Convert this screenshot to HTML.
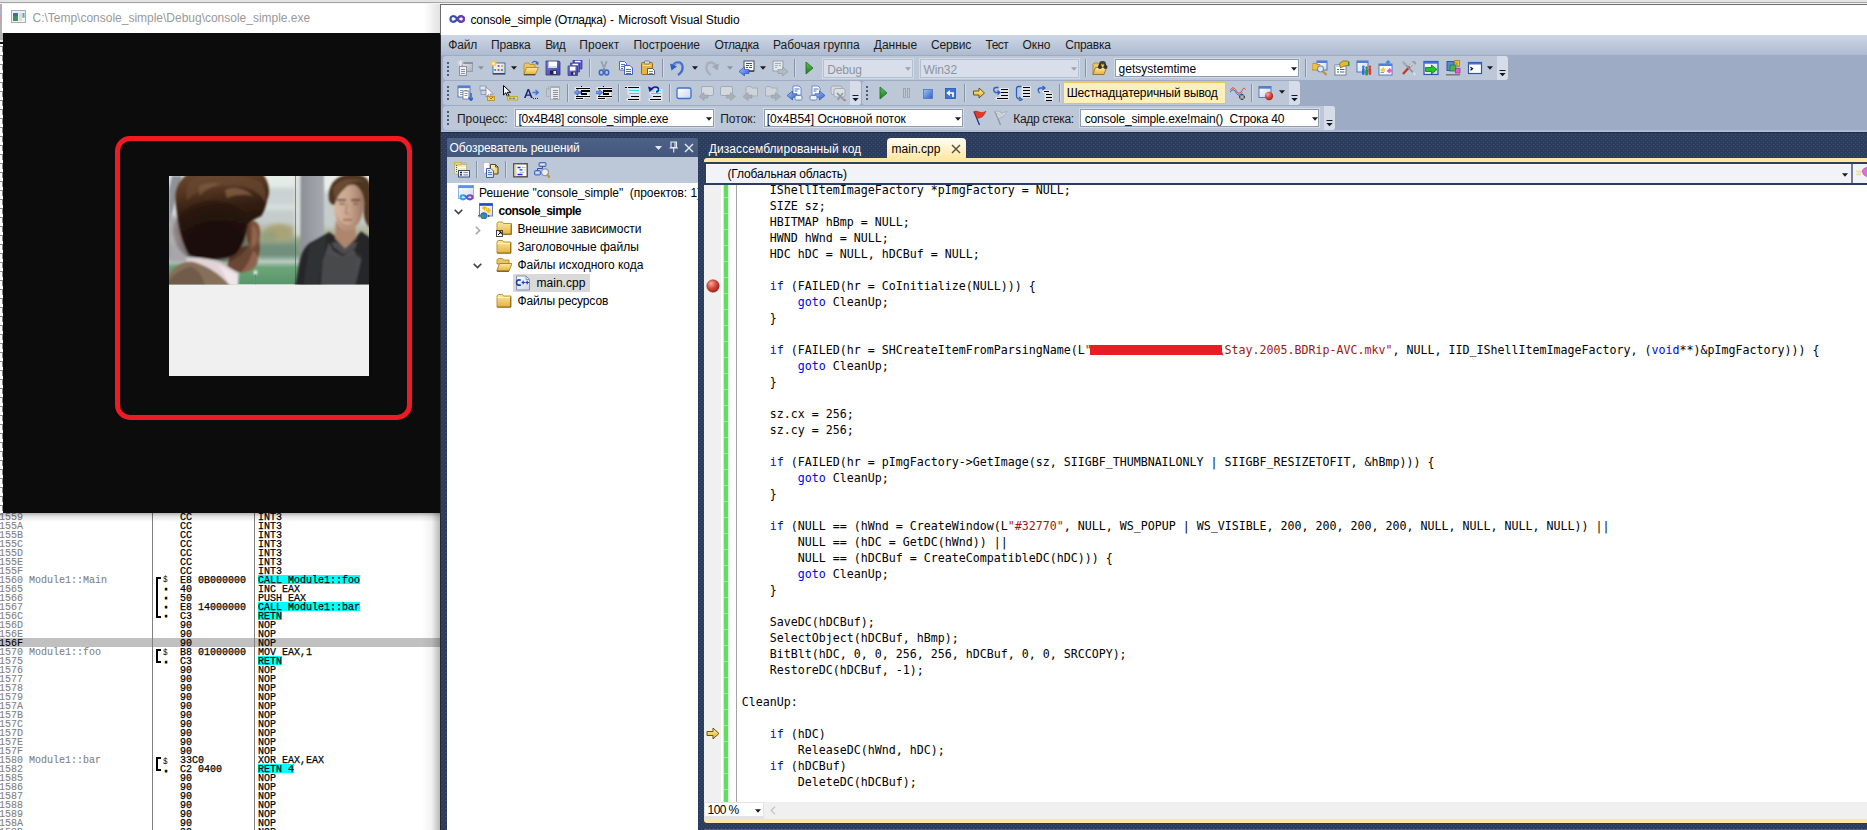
<!DOCTYPE html>
<html lang="ru"><head><meta charset="utf-8"><title>console_simple (Отладка) - Microsoft Visual Studio</title>
<style>
html,body{margin:0;padding:0;background:#fff;}
body{width:1867px;height:830px;overflow:hidden;font:12px 'Liberation Sans',sans-serif;color:#000;}
#root{position:relative;width:1867px;height:830px;overflow:hidden;}
#root div,#root span.t,#root svg{position:absolute;}
.t{white-space:pre;line-height:16px;}
.oc{font:11px/9px 'Liberation Mono',monospace;white-space:pre;transform-origin:0 0;transform:translateY(0.5px) scaleX(0.90909);-webkit-text-stroke:0.25px currentColor;}
.oc s{text-decoration:none;font-size:8.5px;position:relative;top:-1px;-webkit-text-stroke:0;}
.oc u{text-decoration:none;font-weight:700;-webkit-text-stroke:1px #000;position:relative;top:-1.5px;}
.code{font:11.643px/16px 'DejaVu Sans Mono','Liberation Mono',monospace;white-space:pre;color:#000;}
.code b{font-weight:400;color:#0000ff;}
.code i{font-style:normal;color:#a31515;}

</style></head><body>
<div id="root">
<div style="left:0px;top:513px;width:441px;height:317px;background:#fff;"></div>
<div style="left:0px;top:638px;width:441px;height:9px;background:#c0c0c0;"></div>
<div style="left:258px;top:575px;width:102px;height:9px;background:#00ffff;"></div>
<div style="left:258px;top:602px;width:102px;height:9px;background:#00ffff;"></div>
<div style="left:258px;top:611px;width:24px;height:9px;background:#00ffff;"></div>
<div style="left:258px;top:656px;width:24px;height:9px;background:#00ffff;"></div>
<div style="left:258px;top:764px;width:36px;height:9px;background:#00ffff;"></div>
<div class="oc" style="left:-1px;top:512px;color:#808080;-webkit-text-stroke:0.1px currentColor;">1559
155A
155B
155C
155D
155E
155F
1560 Module1::Main
1565
1566
1567
156C
156D
156E
<b style="color:#000;font-weight:400">156F</b>
1570 Module1::foo
1575
1576
1577
1578
1579
157A
157B
157C
157D
157E
157F
1580 Module1::bar
1582
1585
1586
1587
1588
1589
158A
158B</div>
<div class="oc" style="left:162.5px;top:512px;color:#000;">






<s>$</s>
<u>·</u>
<u>·</u>
<u>·</u>
<u>·</u>



<s>$</s>
<u>·</u>










<s>$</s>
<u>·</u>






</div>
<div class="oc" style="left:180px;top:512px;color:#000;">CC
CC
CC
CC
CC
CC
CC
E8 0B000000
40
50
E8 14000000
C3
90
90
90
B8 01000000
C3
90
90
90
90
90
90
90
90
90
90
33C0
C2 0400
90
90
90
90
90
90
90</div>
<div class="oc" style="left:258px;top:512px;color:#000;">INT3
INT3
INT3
INT3
INT3
INT3
INT3
CALL Module1::foo
INC EAX
PUSH EAX
CALL Module1::bar
RETN
NOP
NOP
NOP
MOV EAX,1
RETN
NOP
NOP
NOP
NOP
NOP
NOP
NOP
NOP
NOP
NOP
XOR EAX,EAX
RETN 4
NOP
NOP
NOP
NOP
NOP
NOP
NOP</div>
<div style="left:152px;top:513px;width:1px;height:317px;background:#808080;"></div>
<div style="left:254px;top:513px;width:1px;height:317px;background:#808080;"></div>
<div style="left:156px;top:577px;width:3px;height:37px;border:2px solid #000;border-right:none;"></div>
<div style="left:156px;top:649px;width:3px;height:10px;border:2px solid #000;border-right:none;"></div>
<div style="left:156px;top:757px;width:3px;height:10px;border:2px solid #000;border-right:none;"></div>
<div style="left:0px;top:513px;width:441px;height:9px;background:linear-gradient(rgba(0,0,0,.30),rgba(0,0,0,.10) 40%,rgba(0,0,0,0));"></div>
<div style="left:422px;top:513px;width:19px;height:317px;background:linear-gradient(90deg,rgba(0,0,0,0),rgba(0,0,0,.05) 50%,rgba(0,0,0,.30));"></div>
<div style="left:0px;top:0px;width:1867px;height:2px;background:#e3e3e3;"></div>
<div style="left:0px;top:2px;width:1867px;height:1px;background:#a5a5a5;"></div>
<div style="left:0px;top:3px;width:3px;height:510px;background:#d9d9d9;"></div>
<div style="left:0px;top:3px;width:3px;height:17px;background:#c4a6ae;"></div>
<div style="left:0px;top:10px;width:3px;height:4px;background:#9db7d8;"></div>
<div style="left:0px;top:20px;width:3px;height:20px;background:#b2b2b2;"></div>
<div style="left:0px;top:40px;width:3px;height:2px;background:#e4e4e4;"></div>
<div style="left:0px;top:42px;width:3px;height:2px;background:#101010;"></div>
<div style="left:0px;top:44px;width:3px;height:469px;background:repeating-linear-gradient(#fff 0,#fff 2px,#8c8c8c 2px,#8c8c8c 3px,#fff 3px,#fff 9px);"></div>
<div style="left:2px;top:44px;width:1px;height:469px;background:repeating-linear-gradient(#fff 0,#fff 2px,#8a8a8a 2px,#8a8a8a 8px,#fff 8px,#fff 9px);"></div>
<div style="left:2.3px;top:3px;width:438.7px;height:30px;background:#fff;"></div>
<div style="left:3px;top:33px;width:438px;height:480px;background:#0c0c0c;"></div>
<div style="left:424px;top:3px;width:17px;height:30px;background:linear-gradient(90deg,rgba(0,0,0,0),rgba(0,0,0,.12));"></div>
<svg style="left:11px;top:10px" width="15" height="13" viewBox="0 0 15 13"><rect x=".5" y=".5" width="14" height="12" fill="#f4f4f4" stroke="#a9aeb4"/><rect x="1.5" y="1.5" width="12" height="1" fill="#dfe6ee"/><rect x="2" y="3" width="5" height="8" fill="#3f8f66"/><rect x="2" y="3" width="5" height="3" fill="#3c6fa6"/><rect x="8" y="3" width="3" height="8" fill="#dcdcdc"/><rect x="11.5" y="3" width="2" height="4" fill="#5f9fd0"/><rect x="11.5" y="6" width="2" height="2" fill="#7fbf8f"/></svg>
<span class="t" style="left:32.5px;top:9.8px;color:#999;letter-spacing:-0.010px;">C:\Temp\console_simple\Debug\console_simple.exe</span>
<div style="left:115px;top:136px;width:287px;height:274px;border:5px solid #ed1c24;border-radius:15px;"></div>
<div style="left:169px;top:176px;width:200px;height:200px;background:#f0f0f0;"></div>
<svg style="left:169px;top:176px" width="200" height="108.6" viewBox="0 0 200 108" preserveAspectRatio="none">
<defs>
<filter id="b1" x="-20%" y="-20%" width="140%" height="140%"><feGaussianBlur stdDeviation="0.9"/></filter>
<filter id="b2" x="-20%" y="-20%" width="140%" height="140%"><feGaussianBlur stdDeviation="2.2"/></filter>
<filter id="b3" x="-30%" y="-30%" width="160%" height="160%"><feGaussianBlur stdDeviation="4"/></filter>
<linearGradient id="bg" x1="0" y1="0" x2="0" y2="1"><stop offset="0" stop-color="#e9eee9"/><stop offset=".12" stop-color="#e2e8e4"/><stop offset=".2" stop-color="#cdd5d4"/><stop offset=".42" stop-color="#c3cbca"/><stop offset=".5" stop-color="#b3b59a"/><stop offset=".6" stop-color="#94a388"/><stop offset=".72" stop-color="#7f9a86"/><stop offset=".79" stop-color="#b9cbc0"/><stop offset=".84" stop-color="#6ea57a"/><stop offset="1" stop-color="#57966a"/></linearGradient>
<linearGradient id="pil" x1="0" y1="0" x2="1" y2="0"><stop offset="0" stop-color="#8b8f95"/><stop offset=".5" stop-color="#9a9ea4"/><stop offset="1" stop-color="#a6aab0"/></linearGradient>
<linearGradient id="hair" x1="0.2" y1="0" x2="0.35" y2="1"><stop offset="0" stop-color="#69482f"/><stop offset=".22" stop-color="#543622"/><stop offset=".42" stop-color="#362013"/><stop offset=".62" stop-color="#25140c"/><stop offset="1" stop-color="#1e100a"/></linearGradient><radialGradient id="hair2" gradientUnits="userSpaceOnUse" cx="44" cy="56" r="46"><stop offset="0" stop-color="#1c0f09" stop-opacity=".85"/><stop offset=".6" stop-color="#1c0f09" stop-opacity=".45"/><stop offset="1" stop-color="#1c0f09" stop-opacity="0"/></radialGradient>
<linearGradient id="face" x1="0" y1="0" x2="1" y2="0"><stop offset="0" stop-color="#d9b9a2"/><stop offset=".55" stop-color="#c7a28b"/><stop offset="1" stop-color="#9a7560"/></linearGradient>
<clipPath id="pc"><rect width="200" height="108"/></clipPath>
</defs>
<g clip-path="url(#pc)">
<rect width="200" height="108" fill="url(#bg)"/>
<g filter="url(#b2)">
<rect x="96" y="12" width="32" height="10" fill="#c9d1d2"/>
<rect x="92" y="29" width="36" height="4" fill="#dde3e2"/>
<rect x="96" y="36" width="30" height="8" fill="#c5cccb"/>
<ellipse cx="110" cy="56" rx="14" ry="8" fill="#aaa374"/>
<ellipse cx="100" cy="60" rx="8" ry="6" fill="#93a07c"/>
<rect x="90" y="68" width="38" height="12" fill="#6f8f7b"/>
<rect x="0" y="0" width="12" height="40" fill="#d3dade"/>
<rect x="0" y="40" width="20" height="46" fill="#a9a5aa"/>
<rect x="0" y="58" width="18" height="10" fill="#b2aeb3"/>
<rect x="0" y="90" width="12" height="12" fill="#6a9a78"/>
<rect x="155" y="0" width="10" height="14" fill="#e9ede9"/>
<rect x="155" y="16" width="10" height="36" fill="#c4cccc"/>
<rect x="126" y="0" width="7" height="60" fill="#d9dfdd"/>
</g>
<path d="M3 0L13 0L0 48L0 14Z" fill="#8e9299" filter="url(#b1)"/>
<rect x="131.500" y="-2" width="23.500" height="112" fill="url(#pil)" filter="url(#b1)"/>
<rect x="126" y="0" width="1" height="108" fill="#46524f" opacity=".6"/>
<ellipse cx="86.500" cy="96" rx="2" ry="2.300" fill="#e4ece6" filter="url(#b1)"/>
<rect x="86" y="98" width="1" height="10" fill="#5f9170"/>
<!-- left man -->
<g filter="url(#b1)">
<path d="M62 70C70 72 84 70 90 62L91 72C90 84 84 92 72 96L58 92Z" fill="#6b4635"/>
<path d="M78 48C82 42 90 44 91 54C92 64 88 72 82 73C78 68 76 56 78 48Z" fill="#7d523c"/>
<path d="M82 50C86 48 88 54 88 60C88 66 86 70 83 70C82 64 81 56 82 50Z" fill="#93664d"/>
<path d="M84 74C88 76 90 82 88 88C84 94 78 96 72 96C78 90 82 82 84 74Z" fill="#8d6450"/>
<path d="M7 30C4 14 10 2 22 -4L92 -4C100 4 102 16 98 24C97 30 95 36 92 40C88 42 82 44 79 48C77 58 74 70 66 78C54 84 34 84 20 78C12 64 9 46 7 30Z" fill="url(#hair)"/>
<ellipse cx="44" cy="56" rx="40" ry="32" fill="url(#hair2)"/>
<path d="M22 4C40 -4 70 -4 92 6C96 12 98 18 96 26C90 14 76 8 60 10C44 10 30 12 18 24C16 16 18 8 22 4Z" fill="#6a4830" opacity=".7"/>
<path d="M56 14C64 10 76 12 84 20C78 18 66 18 58 22Z" fill="#94704f" opacity=".6"/>
<path d="M30 10C38 6 46 6 52 8C44 10 36 14 30 20Z" fill="#8a6648" opacity=".5"/>
<path d="M16 82C26 80 40 82 52 86L70 97L69 110L56 110C50 100 38 92 22 88Z" fill="#e1d3d7"/>
<path d="M48 88L68 98L69 110L60 110C58 102 54 94 48 88Z" fill="#efe6ea"/>
<path d="M-2 102C2 92 10 86 22 85C36 88 50 96 62 110L-2 110Z" fill="#86705a"/>
<path d="M-2 106C6 96 14 92 22 90C30 94 34 100 36 110L-2 110Z" fill="#6f5c48"/>
</g>
<!-- right man -->
<g filter="url(#b1)">
<path d="M126 110L130 88C132 76 136 68 146 64L160 56L170 62L186 62L192 55L202 62L202 110Z" fill="#25282a"/>
<path d="M140 70C146 66 152 62 158 60L150 110L134 110Z" fill="#2d3032"/>
<path d="M152 110L154 84L160 66L188 66L192 84L186 110Z" fill="#4d4e51"/>
<path d="M156 76C164 82 176 84 188 76L186 110L154 110Z" fill="#47484b"/>
<path d="M160 55L164 70L174 78L186 72L192 56L190 82L184 72L174 80L164 74L158 62Z" fill="#2b2622"/>
<path d="M167 44L186 46L187 62L176 72L166 62Z" fill="#ad866d"/>
<path d="M164 22C164 10 170 5 180 5C190 5 195 12 195 24C195 36 192 46 186 51C182 55 176 55 172 51C166 46 164 34 164 22Z" fill="url(#face)"/>
<path d="M166 34C168 46 172 52 179 54C186 52 190 46 193 36C190 44 186 48 179 49C172 48 168 42 166 34Z" fill="#b08a72" opacity=".8"/>
<path d="M160 24C158 8 168 -2 184 -2C196 -2 204 4 202 20L202 52C196 48 194 40 195 30C196 20 192 12 186 9C182 8 178 9 176 12C172 16 168 20 166 28C164 30 162 28 160 24Z" fill="#4e3422"/>
<path d="M164 12C170 2 184 0 198 6C190 4 180 6 174 12C170 16 168 20 166 24Z" fill="#725236" opacity=".8"/>
<path d="M168 24h9M182 24h9" stroke="#4a3326" stroke-width="1.600"/>
<path d="M170 27.500h6M184 27.500h5" stroke="#5e463a" stroke-width="1.400"/>
<path d="M178 28L176.500 37L180 38" fill="none" stroke="#a27d68" stroke-width="1.200"/>
<path d="M174 43.500h9" stroke="#8e5c4e" stroke-width="1.500"/>
</g>
</g></svg>
<div style="left:0px;top:3px;width:1867px;height:1px;background:#f4f4f4;"></div>
<div style="left:440px;top:4px;width:1427px;height:31px;background:#6b6b6b;"></div>
<div style="left:440px;top:35px;width:1427px;height:795px;background:#23272e;"></div>
<div style="left:441px;top:5px;width:1426px;height:30px;background:#fff;"></div>
<svg style="left:449px;top:11px" width="16" height="16" viewBox="0 0 16 16"><path d="M1.500 8c0-3 3.500-4 6-1l1.500 2c2.500 3 6 2 6-1s-3.500-4-6-1L7.500 9c-2.500 3-6 2-6-1z" fill="none" stroke="#3a4fa8" stroke-width="2.200"/><path d="M9 7c2.500-3 6-2 6 1s-3.500 4-6 1" fill="none" stroke="#6a3fb0" stroke-width="2.200"/></svg>
<span class="t" style="left:470.5px;top:12.3px;letter-spacing:-0.136px;">console_simple </span>
<span class="t" style="left:554.5px;top:12.3px;letter-spacing:-0.438px;">(Отладка)</span>
<span class="t" style="left:606.0px;top:12.3px;letter-spacing:0.543px;"> - </span>
<span class="t" style="left:618.3px;top:12.3px;letter-spacing:-0.024px;">Microsoft Visual Studio</span>
<div style="left:441px;top:35px;width:1426px;height:20px;background:linear-gradient(#ced7e6,#bcc7d9 55%,#aebbd0);"></div>
<span class="t" style="left:448.3px;top:36.8px;color:#1b1b1b;letter-spacing:-0.204px;">Файл</span>
<span class="t" style="left:491.1px;top:36.8px;color:#1b1b1b;letter-spacing:-0.174px;">Правка</span>
<span class="t" style="left:545.2px;top:36.8px;color:#1b1b1b;letter-spacing:-0.606px;">Вид</span>
<span class="t" style="left:579.2px;top:36.8px;color:#1b1b1b;letter-spacing:0.095px;">Проект</span>
<span class="t" style="left:633.4px;top:36.8px;color:#1b1b1b;letter-spacing:-0.023px;">Построение</span>
<span class="t" style="left:714.4px;top:36.8px;color:#1b1b1b;letter-spacing:-0.448px;">Отладка</span>
<span class="t" style="left:773.0px;top:36.8px;color:#1b1b1b;letter-spacing:-0.015px;">Рабочая группа</span>
<span class="t" style="left:873.8px;top:36.8px;color:#1b1b1b;letter-spacing:-0.010px;">Данные</span>
<span class="t" style="left:931.0px;top:36.8px;color:#1b1b1b;letter-spacing:-0.182px;">Сервис</span>
<span class="t" style="left:985.6px;top:36.8px;color:#1b1b1b;letter-spacing:-0.532px;">Тест</span>
<span class="t" style="left:1022.4px;top:36.8px;color:#1b1b1b;letter-spacing:0.077px;">Окно</span>
<span class="t" style="left:1065.2px;top:36.8px;color:#1b1b1b;letter-spacing:-0.225px;">Справка</span>
<div style="left:441px;top:55px;width:1426px;height:77px;background:#9dabc4;"></div>
<div style="left:441px;top:130px;width:1426px;height:2px;background:linear-gradient(#a7b4cc,#b6c2d9);"></div>
<div style="left:443px;top:56px;width:1065px;height:24px;background:#bcc7d8;border-radius:3px;"></div><div style="left:1497px;top:56px;width:11px;height:24px;background:#d6dce8;border-radius:0 3px 3px 0;"></div><svg style="left:1498.5px;top:69px" width="7" height="8" viewBox="0 0 7 8"><path d="M.5 1.500h6" stroke="#10182b" stroke-width="1"/><path d="M.3 4h6.400L3.500 7.300z" fill="#10182b"/></svg>
<div style="left:447px;top:62px;width:2px;height:14px;background:repeating-linear-gradient(#4a5a78 0,#4a5a78 2px,rgba(0,0,0,0) 2px,rgba(0,0,0,0) 4px);"></div>
<svg style="left:457px;top:60px" width="16" height="16" viewBox="0 0 16 16"><rect x="5.500" y="2.500" width="10" height="9" fill="url(#gGray)" stroke="#9aa0a8"/><rect x="5" y="2" width="11" height="2" fill="#8d939b"/><rect x="2.500" y="6.500" width="7" height="9" fill="#eceef0" stroke="#8d939b"/><path d="M4 9.500h4M4 11.500h4M4 13.500h4" stroke="#8d939b"/><path d="M3.500 0v6M.5 3h6M1.300.8l4.400 4.400M5.700.8L1.300 5.200" stroke="#e4e8ee" stroke-width="1"/></svg>
<svg style="left:478px;top:66px" width="6" height="4" viewBox="0 0 7 4"><path d="M0 0h7L3.500 4z" fill="#8d939b"/></svg>
<svg style="left:490px;top:60px" width="16" height="16" viewBox="0 0 16 16"><rect x="3" y="3" width="12" height="11" fill="url(#gWin)" stroke="#4b5f86" stroke-width=".9"/><rect x="3" y="13" width="12" height="1.4" fill="#36456a"/><circle cx="8.5" cy="6" r="1.1" fill="#6a5acd"/><circle cx="12" cy="6" r="1.1" fill="#f59a23"/><circle cx="5.2" cy="10" r="1.1" fill="#2a7fe0"/><circle cx="8.5" cy="10" r="1.1" fill="#e8382a"/><circle cx="12" cy="10" r="1.1" fill="#2a9a2a"/><path d="M3.5 0v7M0 3.5h7M1 1l5 5M6 1L1 6" stroke="#f5c93c" stroke-width="1.3"/><circle cx="3.5" cy="3.5" r="1.3" fill="#fff6c8"/></svg>
<svg style="left:510.5px;top:66px" width="6" height="4" viewBox="0 0 7 4"><path d="M0 0h7L3.500 4z" fill="#1b1b1b"/></svg>
<svg style="left:523px;top:60px" width="16" height="16" viewBox="0 0 16 16"><path d="M1 4.5l1-1.5h4l1 1.5h5V14H1z" fill="#e9c566" stroke="#b58a2a" stroke-width=".8"/><path d="M3.5 7.5H15.5L12.3 14.5H.8z" fill="url(#gFold)" stroke="#a87d22" stroke-width=".8"/><path d="M1 14.8h11.3" stroke="#333" stroke-width="1"/><path d="M9 3.2C10.5.8 13.5.8 14.6 3.4" fill="none" stroke="#3b66b5" stroke-width="1.2"/><path d="M15.6 1.6l-.4 3.4-3-1.2z" fill="#3b66b5"/></svg>
<svg style="left:545px;top:60px" width="16" height="16" viewBox="0 0 16 16"><path d="M1 1h13l1 1v13H1z" fill="url(#gDisk)" stroke="#34358a" stroke-width=".8"/><rect x="3.5" y="1.5" width="8.5" height="6.5" fill="#fff"/><rect x="3.5" y="6" width="8.5" height="2" fill="#d5dcf0"/><rect x="5" y="10.5" width="6.5" height="4" fill="#23233a"/><rect x="8.5" y="11" width="2.5" height="3" fill="#e8e8f4"/></svg>
<svg style="left:567px;top:60px" width="16" height="16" viewBox="0 0 16 16"><path d="M6 0h9v9H6z" fill="#5a5cc0" stroke="#34358a" stroke-width=".7"/><rect x="8" y=".8" width="5.5" height="1.6" fill="#fff"/><path d="M3.500 3h9v9H3.500z" fill="#6264c8" stroke="#34358a" stroke-width=".7"/><rect x="5.500" y="3.800" width="5.500" height="1.600" fill="#fff"/><path d="M1 6h9.500v9.500H1z" fill="url(#gDisk)" stroke="#34358a" stroke-width=".7"/><rect x="3" y="6.600" width="5.500" height="4" fill="#fff"/><rect x="4" y="12" width="4.500" height="3" fill="#2b2b44"/><rect x="6.300" y="12.400" width="1.800" height="2.300" fill="#e0e0ee"/></svg>
<div style="left:589px;top:59px;width:1px;height:18px;background:#8591a5;"></div><div style="left:590px;top:59px;width:1px;height:18px;background:#d3dae6;"></div>
<svg style="left:596px;top:60px" width="16" height="16" viewBox="0 0 16 16"><path d="M5.300 1L8.600 10M10.700 1L7.400 10" stroke="#767c86" stroke-width="1.500"/><path d="M5.300 1L8.100 8.500M10.700 1L7.900 8.500" stroke="#c9ced6" stroke-width=".6"/><ellipse cx="5.300" cy="12.500" rx="2" ry="2.500" fill="none" stroke="#3a68c8" stroke-width="1.500"/><ellipse cx="10.700" cy="12.500" rx="2" ry="2.500" fill="none" stroke="#3a68c8" stroke-width="1.500"/></svg>
<svg style="left:618px;top:60px" width="16" height="16" viewBox="0 0 16 16"><path d="M1.500 1.500h5l2 2v6.500h-7z" fill="#fff" stroke="#4f73c0"/><path d="M3 4.500h4M3 6.500h4M3 8.500h2" stroke="#4f73c0"/><path d="M6.500 5.500h5.500l2.500 2.500v6.500h-8z" fill="#fff" stroke="#3f63b5"/><path d="M8 9.500h5M8 11.500h5M8 13.500h5" stroke="#3f73d5" shape-rendering="crispEdges"/></svg>
<svg style="left:640px;top:60px" width="16" height="16" viewBox="0 0 16 16"><rect x="1.500" y="2.500" width="11" height="12" rx="1" fill="#e6b645" stroke="#9a6c14"/><rect x="4.500" y="1" width="5" height="3" rx=".8" fill="#d9dce2" stroke="#6b6f78" stroke-width=".8"/><rect x="3" y="5" width="8" height="1" fill="#f6dd95"/><path d="M7.500 8.500h5l2 2v4h-7z" fill="#fff" stroke="#5a5f6b"/><path d="M9 11.500h4M9 13.500h4" stroke="#7b8498" shape-rendering="crispEdges"/></svg>
<div style="left:662px;top:59px;width:1px;height:18px;background:#8591a5;"></div><div style="left:663px;top:59px;width:1px;height:18px;background:#d3dae6;"></div>
<svg style="left:669px;top:60px" width="16" height="16" viewBox="0 0 16 16"><path d="M4 6C6 1.500 12.500 1 13.500 6.500C14 10 12 13 9 15" fill="none" stroke="#3f6fd0" stroke-width="2.400"/><path d="M4 6C6 2.500 11.500 2 12.500 6.500" fill="none" stroke="#8ab0ee" stroke-width=".8"/><path d="M1 3.500L8 6.500L2.500 10.500z" fill="#2f5fc4"/></svg>
<svg style="left:692px;top:66px" width="6" height="4" viewBox="0 0 7 4"><path d="M0 0h7L3.500 4z" fill="#1b1b1b"/></svg>
<svg style="left:704px;top:60px" width="16" height="16" viewBox="0 0 16 16"><path d="M12 6C10 1.500 3.500 1 2.500 6.500C2 10 4 13 7 15" fill="none" stroke="#aab0ba" stroke-width="2.400"/><path d="M15 3.500L8 6.500L13.500 10.500z" fill="#a2a8b2"/></svg>
<svg style="left:727px;top:66px" width="6" height="4" viewBox="0 0 7 4"><path d="M0 0h7L3.500 4z" fill="#8d939b"/></svg>
<svg style="left:739px;top:60px" width="16" height="16" viewBox="0 0 16 16"><rect x="5" y="1" width="10" height="10" fill="#fff" stroke="#4b4f66" stroke-width="1"/><rect x="5" y="10.500" width="10" height="1.200" fill="#2b2f44"/><path d="M7 3.500h6M7 5.500h3M11 5.500h2M7 7.500h2M10 7.500h3" stroke="#2a4fd0" stroke-width="1.100"/><path d="M0 11.500L5.500 7v2.500h4.500v4H5.500V16z" fill="url(#gBlue)" stroke="#2c55b8" stroke-width=".7"/></svg>
<svg style="left:760px;top:66px" width="6" height="4" viewBox="0 0 7 4"><path d="M0 0h7L3.500 4z" fill="#1b1b1b"/></svg>
<svg style="left:772px;top:60px" width="16" height="16" viewBox="0 0 16 16"><rect x="1" y="1" width="10" height="10" fill="#e4e7eb" stroke="#9aa0a8" stroke-width="1"/><path d="M3 3.500h6M3 5.500h3M7 5.500h2M3 7.500h2" stroke="#a7adb6" stroke-width="1.100"/><path d="M16 11.500L10.500 7v2.500H6v4h4.500V16z" fill="#b4bac3" stroke="#9399a2" stroke-width=".7"/></svg>
<div style="left:794px;top:59px;width:1px;height:18px;background:#8591a5;"></div><div style="left:795px;top:59px;width:1px;height:18px;background:#d3dae6;"></div>
<svg style="left:801px;top:60px" width="16" height="16" viewBox="0 0 16 16"><path d="M5 2L12 8L5 14z" fill="url(#gGreen)" stroke="#1c6a1c" stroke-width=".8"/></svg>
<div style="left:823.3px;top:58.6px;width:87.3px;height:17px;background:#d8dfea;border:1px solid #b4bfd0;box-shadow:0 0 0 1px rgba(255,255,255,.35);"></div><span class="t" style="left:827.3px;top:61.7px;color:#8c94a3;letter-spacing:-0.175px;">Debug</span><svg style="left:904.5999999999999px;top:66.89999999999999px" width="6" height="4" viewBox="0 0 7 4"><path d="M0 0h7L3.500 4z" fill="#9aa2b0"/></svg>
<div style="left:919.5px;top:58.6px;width:157px;height:17px;background:#d8dfea;border:1px solid #b4bfd0;box-shadow:0 0 0 1px rgba(255,255,255,.35);"></div><span class="t" style="left:923.5px;top:61.7px;color:#8c94a3;letter-spacing:-0.103px;">Win32</span><svg style="left:1070.5px;top:66.89999999999999px" width="6" height="4" viewBox="0 0 7 4"><path d="M0 0h7L3.500 4z" fill="#9aa2b0"/></svg>
<div style="left:1085px;top:59px;width:1px;height:18px;background:#8591a5;"></div><div style="left:1086px;top:59px;width:1px;height:18px;background:#d3dae6;"></div>
<svg style="left:1092px;top:60px" width="16" height="16" viewBox="0 0 16 16"><path d="M1 4.500l1-1.500h4l1 1.500h5V14H1z" fill="#e9c566" stroke="#a8801f" stroke-width=".8"/><path d="M3.500 7.500H14.500L12 14.500H.8z" fill="url(#gFold)" stroke="#8a6a18" stroke-width=".8"/><path d="M8.500 2l-1.500 6M12.500 2l1.500 6" stroke="#222" stroke-width="1.600"/><circle cx="8" cy="7" r="2" fill="#333"/><circle cx="13.500" cy="7" r="2" fill="#333"/><rect x="8.500" y="1" width="4" height="3" fill="#444"/></svg>
<div style="left:1114.5px;top:58.6px;width:182px;height:16.5px;background:#fff;border:1px solid #8d9bb3;box-shadow:0 0 0 1px rgba(255,255,255,.35);"></div><span class="t" style="left:1118.5px;top:60.7px;letter-spacing:0.026px;">getsystemtime</span><svg style="left:1290.5px;top:67.05px" width="6" height="4" viewBox="0 0 7 4"><path d="M0 0h7L3.500 4z" fill="#1b1b1b"/></svg>
<div style="left:1305px;top:59px;width:1px;height:18px;background:#8591a5;"></div><div style="left:1306px;top:59px;width:1px;height:18px;background:#d3dae6;"></div>
<svg style="left:1312px;top:60px" width="16" height="16" viewBox="0 0 16 16"><rect x="5" y="1" width="10" height="9" fill="url(#gWin)" stroke="#4b6fb8" stroke-width=".9"/><rect x="5" y="1" width="10" height="2" fill="#4f7fd8"/><path d="M0 4.500l1-1.200h3l1 1.200h3V10H0z" fill="#ecc04a" stroke="#a8801f" stroke-width=".7"/><circle cx="8.500" cy="9" r="3" fill="#d6ecf8" stroke="#7b8ca8" stroke-width="1.100"/><path d="M10.800 11.300L14.500 15" stroke="#c98a2b" stroke-width="2"/></svg>
<svg style="left:1334px;top:60px" width="16" height="16" viewBox="0 0 16 16"><rect x="1" y="5" width="11" height="10" fill="#fff" stroke="#6b7488" stroke-width=".9"/><rect x="1" y="5" width="11" height="2" fill="#c9d2e4"/><path d="M3 9.500h2M6 9.500h4.500M3 12h2M6 12h4.500" stroke="#3f63b5" stroke-width="1.100"/><path d="M5.500 3.500L9 1h4.500l1 1.500v3l-5 .8L6.500 8z" fill="#e8b838" stroke="#8a6a18" stroke-width=".8"/><rect x="14" y="1.500" width="1.500" height="4.500" fill="#2a9a2a"/></svg>
<svg style="left:1356px;top:60px" width="16" height="16" viewBox="0 0 16 16"><rect x="1" y="1" width="11" height="11" fill="url(#gWin)" stroke="#4b6fb8" stroke-width=".9"/><rect x="1" y="1" width="11" height="2" fill="#4f7fd8"/><rect x="6" y="8" width="2.600" height="7" rx="1.200" fill="#2f6fe0"/><circle cx="7.300" cy="6.800" r="1.300" fill="#2f6fe0"/><rect x="9.300" y="9" width="2.600" height="6.500" rx="1.200" fill="#2a9a2a"/><circle cx="10.600" cy="7.800" r="1.300" fill="#2a9a2a"/><rect x="12.600" y="8" width="2.600" height="7" rx="1.200" fill="#e23a2a"/><circle cx="13.900" cy="6.800" r="1.300" fill="#e23a2a"/></svg>
<svg style="left:1378px;top:60px" width="16" height="16" viewBox="0 0 16 16"><rect x="1" y="4" width="13" height="11" fill="#fff" stroke="#4b6fb8" stroke-width=".9"/><rect x="1" y="4" width="13" height="2" fill="#4f7fd8"/><path d="M2.500 10h3.500M2.500 12.500h3.500" stroke="#8a94a8"/><path d="M5 6.500l1.200 2 2 .300-1.500 1.500.4 2-1.900-1-1.900 1 .4-2L2.200 8.800l2-.300z" fill="#f5c93c"/><path d="M11.500 8l3 2.500-3 3-3-2.500z" fill="#e85ad0"/><path d="M10 0l2.500 2L10 4.500 7.500 2.500z" fill="#3f8fd8"/></svg>
<svg style="left:1401px;top:60px" width="16" height="16" viewBox="0 0 16 16"><path d="M2 14L11 4" stroke="#c03a2a" stroke-width="2.400"/><path d="M8.500 6.500L13 2" stroke="#c9ced6" stroke-width="2"/><path d="M10.500 1l3.500 0 1.500 3-2 .5z" fill="#9aa0a8"/><path d="M3 3L13.500 14" stroke="#8d939b" stroke-width="1.800"/><path d="M1 2.500C1 1 3 .5 4 1.500L3 3l1 1 1.500-1C6 5 4.500 6 3 5.500z" fill="#aab0ba"/><path d="M12 12.500l2.500 2.500" stroke="#d9dce2" stroke-width="2.200"/></svg>
<svg style="left:1423px;top:60px" width="16" height="16" viewBox="0 0 16 16"><rect x="1" y="1.500" width="14" height="13" fill="url(#gWin)" stroke="#2f55b0" stroke-width="1.200"/><rect x="1" y="1.500" width="14" height="2.200" fill="#3f6fd8"/><path d="M2.500 7.500h6V5l5.500 4.500L8.500 14v-2.500h-6z" fill="#1ec81e" stroke="#0c7a0c" stroke-width=".8"/></svg>
<svg style="left:1445px;top:60px" width="16" height="16" viewBox="0 0 16 16"><rect x="2" y="1.500" width="7" height="9" fill="#4f8fd8" stroke="#2f55b0" stroke-width="1"/><rect x="5" y="5" width="6" height="6" fill="#4fae5a" stroke="#2a7a34" stroke-width=".8"/><path d="M9.500.5h5v6h-2.500v-3.500h-2.500z" fill="#f0c030" stroke="#9a7410" stroke-width=".7"/><rect x="10.500" y="8.500" width="4.500" height="4.500" fill="#e85ad0" stroke="#a02a90" stroke-width=".7"/><rect x="1" y="14" width="14" height="1.500" fill="#7a7a7a"/></svg>
<svg style="left:1467px;top:60px" width="16" height="16" viewBox="0 0 16 16"><rect x="1.500" y="2.500" width="13" height="11" fill="#fff" stroke="#2f55b0" stroke-width="1.200"/><rect x="1.500" y="2.500" width="13" height="2" fill="#3f6fd8"/><path d="M3.500 7.200l2 1.500-2 1.500" fill="none" stroke="#000" stroke-width="1.200"/></svg>
<svg style="left:1487px;top:66px" width="6" height="4" viewBox="0 0 7 4"><path d="M0 0h7L3.500 4z" fill="#1b1b1b"/></svg>
<div style="left:443px;top:81px;width:418px;height:24px;background:#bcc7d8;border-radius:3px;"></div><div style="left:850px;top:81px;width:11px;height:24px;background:#d6dce8;border-radius:0 3px 3px 0;"></div><svg style="left:851.5px;top:94px" width="7" height="8" viewBox="0 0 7 8"><path d="M.5 1.500h6" stroke="#10182b" stroke-width="1"/><path d="M.3 4h6.400L3.500 7.300z" fill="#10182b"/></svg>
<div style="left:447px;top:86px;width:2px;height:14px;background:repeating-linear-gradient(#4a5a78 0,#4a5a78 2px,rgba(0,0,0,0) 2px,rgba(0,0,0,0) 4px);"></div>
<svg style="left:457px;top:85px" width="16" height="16" viewBox="0 0 16 16"><rect x="1" y="1" width="12" height="11" fill="#fff" stroke="#4b6fb8" stroke-width=".9"/><rect x="1" y="1" width="12" height="2.200" fill="#4f7fd8"/><path d="M3 5.500h3M3 7.500h3M3 9.500h3M7.500 5.500h3M7.500 7.500h3" stroke="#7b8ca8" stroke-width=".9"/><rect x="6" y="6" width="6" height="8" fill="#fff" stroke="#6b7488" stroke-width=".8"/><path d="M7.500 8.500h3M7.500 10.500h3" stroke="#7b8ca8" stroke-width=".9"/><path d="M14 8v7M11.500 12.500L14 15.500L16.500 12.500" fill="none" stroke="#2f5fc4" stroke-width="1.400"/></svg>
<svg style="left:479px;top:85px" width="16" height="16" viewBox="0 0 16 16"><rect x="1" y="1" width="6" height="4" fill="#dfe5ef" stroke="#7b8ca8" stroke-width=".7"/><rect x="2" y="5.500" width="6" height="4" fill="#c9d2e0" stroke="#7b8ca8" stroke-width=".7"/><path d="M7 2v10l2.500-2.500 2 4.500 1.500-.7-2-4.300h3.500z" fill="#f4f6f9" stroke="#8a919c" stroke-width=".8"/><rect x="8.500" y="11.500" width="7" height="4" fill="#f5d24a" stroke="#b58a1a" stroke-width=".8"/><path d="M10.500 12.500l1.500 1.500 2-2" fill="none" stroke="#7a5a10" stroke-width=".8"/></svg>
<svg style="left:502px;top:85px" width="16" height="16" viewBox="0 0 16 16"><path d="M1.500 .5v9.500l2.300-2.200 1.800 4.100 1.500-.7-1.800-3.900H8.700z" fill="#fff" stroke="#000" stroke-width="1"/><rect x="5.500" y="11.500" width="10" height="3.500" fill="#f2ea1a" stroke="#b0a810" stroke-width=".8"/><path d="M7 13.300h7" stroke="#2f5fc4" stroke-width="1.100" stroke-dasharray="2.500 1"/></svg>
<svg style="left:523px;top:85px" width="16" height="16" viewBox="0 0 16 16"><path d="M1 13L4.600 4h1.500L9.700 13H7.900l-.8-2.200H3.500L2.700 13zM4 9.500h2.600L5.300 6z" fill="#1a237e"/><path d="M9.500 7.500h5M12.500 5l2.800 2.500-2.800 2.500" fill="none" stroke="#3f73d5" stroke-width="1.300"/><path d="M10 13.500h5.500" stroke="#1a237e" stroke-width="1" stroke-dasharray="1 1"/></svg>
<svg style="left:545px;top:85px" width="16" height="16" viewBox="0 0 16 16"><rect x="5.500" y="1.500" width="9" height="13" fill="#e9ebee" stroke="#a9afb8"/><rect x="5" y="1" width="10" height="2" fill="#a9afb8"/><path d="M8 5.500h5M8 7.500h5M8 9.500h5M8 11.500h5M8 13.500h5" stroke="#8d939b" shape-rendering="crispEdges"/><path d="M4.500 3.500h-3v8h3M3.500 1v4" fill="none" stroke="#a9afb8"/></svg>
<div style="left:567px;top:84px;width:1px;height:18px;background:#8591a5;"></div><div style="left:568px;top:84px;width:1px;height:18px;background:#d3dae6;"></div>
<svg style="left:574px;top:85px" width="16" height="16" viewBox="0 0 16 16"><path d="M2 3.500h14M2 11.500h14M2 13.500h7" stroke="#fff" stroke-opacity=".55" stroke-width="3" stroke-linecap="square" fill="none"/><path d="M7 6h9M7 9h6" stroke="#fff" stroke-opacity=".55" stroke-width="4" stroke-linecap="square" fill="none"/><path d="M2 3.500h14M2 11.500h14M2 13.500h7" stroke="#000" stroke-width="1" shape-rendering="crispEdges" fill="none"/><path d="M7 6h9M7 9h6" stroke="#000" stroke-width="2" shape-rendering="crispEdges" fill="none"/><path d="M7.500 1v14" stroke="#000" stroke-width="1" stroke-dasharray="1 1" shape-rendering="crispEdges"/><path d="M0 7.500L4 4.300v2.200h3v2H4v2.200z" fill="url(#gBlue)" stroke="#2c55b8" stroke-width=".5"/></svg>
<svg style="left:596px;top:85px" width="16" height="16" viewBox="0 0 16 16"><path d="M2 3.500h14M2 11.500h14M2 13.500h7" stroke="#fff" stroke-opacity=".55" stroke-width="3" stroke-linecap="square" fill="none"/><path d="M7 6h9M7 9h6" stroke="#fff" stroke-opacity=".55" stroke-width="4" stroke-linecap="square" fill="none"/><path d="M2 3.500h14M2 11.500h14M2 13.500h7" stroke="#000" stroke-width="1" shape-rendering="crispEdges" fill="none"/><path d="M7 6h9M7 9h6" stroke="#000" stroke-width="2" shape-rendering="crispEdges" fill="none"/><path d="M7.500 1v14" stroke="#000" stroke-width="1" stroke-dasharray="1 1" shape-rendering="crispEdges"/><path d="M7 7.500L3 4.300v2.200H0v2h3v2.200z" fill="url(#gBlue)" stroke="#2c55b8" stroke-width=".5"/></svg>
<div style="left:618px;top:84px;width:1px;height:18px;background:#8591a5;"></div><div style="left:619px;top:84px;width:1px;height:18px;background:#d3dae6;"></div>
<svg style="left:625px;top:85px" width="16" height="16" viewBox="0 0 16 16"><path d="M0 2.500h2M3 2.500h11M6 11.500h8M3 14.500h11" stroke="#fff" stroke-opacity=".55" stroke-width="3" stroke-linecap="square" fill="none"/><path d="M4 5.500h10M4 8.500h10" stroke="#fff" stroke-opacity=".55" stroke-width="3" stroke-linecap="square" fill="none"/><path d="M0 2.500h2M3 2.500h11M6 11.500h8M3 14.500h11" stroke="#000" stroke-width="1" shape-rendering="crispEdges" fill="none"/><path d="M4 5.500h10M4 8.500h10" stroke="#19e8e8" stroke-width="1" shape-rendering="crispEdges" fill="none"/></svg>
<svg style="left:647px;top:85px" width="16" height="16" viewBox="0 0 16 16"><path d="M6 11.500h8M3 14.500h11" stroke="#fff" stroke-opacity=".55" stroke-width="3" stroke-linecap="square" fill="none"/><path d="M4 8.500h10M9 5.500h5" stroke="#fff" stroke-opacity=".55" stroke-width="3" stroke-linecap="square" fill="none"/><path d="M6 11.500h8M3 14.500h11" stroke="#000" stroke-width="1" shape-rendering="crispEdges" fill="none"/><path d="M4 8.500h10M9 5.500h5" stroke="#19e8e8" stroke-width="1" shape-rendering="crispEdges" fill="none"/><path d="M4.500 4.500C6 1 11.500 1.300 11.500 4.500C11.500 6 10.500 7 9 7" fill="none" stroke="#1a1a9a" stroke-width="1.400"/><path d="M1 1.500L6.500 3.500 2.500 7z" fill="#1a1a9a"/></svg>
<div style="left:669px;top:84px;width:1px;height:18px;background:#8591a5;"></div><div style="left:670px;top:84px;width:1px;height:18px;background:#d3dae6;"></div>
<svg style="left:676px;top:85px" width="16" height="16" viewBox="0 0 16 16"><rect x="1" y="3" width="14" height="10.500" rx="1.800" fill="url(#gWin)" stroke="#3f6fd0" stroke-width="1.300"/></svg>
<svg style="left:698px;top:85px" width="16" height="16" viewBox="0 0 16 16"><rect x="3.500" y="1.500" width="12" height="9" rx="1.500" fill="#d5d9df" stroke="#a4aab3" stroke-width="1"/><path d="M1 11.500L6 7.500v2.500h4v3H6v2.500z" fill="#aab0ba" stroke="#969ca6" stroke-width=".6"/></svg>
<svg style="left:720px;top:85px" width="16" height="16" viewBox="0 0 16 16"><rect x=".5" y="1.500" width="12" height="9" rx="1.500" fill="#d5d9df" stroke="#a4aab3" stroke-width="1"/><path d="M15.500 11.500L10.500 7.500v2.500h-4v3h4v2.500z" fill="#aab0ba" stroke="#969ca6" stroke-width=".6"/></svg>
<svg style="left:742px;top:85px" width="16" height="16" viewBox="0 0 16 16"><path d="M4 3l1-1.500h4l1 1.500h5.500v8H4z" fill="#d0d4da" stroke="#a4aab3" stroke-width=".9"/><path d="M1 11.500L6 7.500v2.500h4v3H6v2.500z" fill="#aab0ba" stroke="#969ca6" stroke-width=".6"/></svg>
<svg style="left:765px;top:85px" width="16" height="16" viewBox="0 0 16 16"><path d="M.5 3l1-1.500h4l1 1.500H12v8H.5z" fill="#d0d4da" stroke="#a4aab3" stroke-width=".9"/><path d="M15.500 11.500L10.500 7.500v2.500h-4v3h4v2.500z" fill="#aab0ba" stroke="#969ca6" stroke-width=".6"/></svg>
<svg style="left:787px;top:85px" width="16" height="16" viewBox="0 0 16 16"><path d="M6 1h6l2 2v7H6z" fill="#fff" stroke="#4f73c0" stroke-width=".8"/><path d="M7.500 4h5M7.500 6h3" stroke="#3f73d5" stroke-width="1.100"/><path d="M0 10.500L5.500 6v2.700h4.500v3.600H5.500V15z" fill="url(#gBlue)" stroke="#2c55b8" stroke-width=".7"/><rect x="8" y="10.500" width="7" height="4.500" rx="1.500" fill="#eef3fb" stroke="#4f73c0" stroke-width=".8"/></svg>
<svg style="left:809px;top:85px" width="16" height="16" viewBox="0 0 16 16"><path d="M3 1h6l2 2v7H3z" fill="#fff" stroke="#4f73c0" stroke-width=".8"/><path d="M4.500 4h5M4.500 6h3" stroke="#3f73d5" stroke-width="1.100"/><path d="M16 10.500L10.500 6v2.700H6v3.600h4.500V15z" fill="url(#gBlue)" stroke="#2c55b8" stroke-width=".7"/><rect x="1" y="10.500" width="7" height="4.500" rx="1.500" fill="#eef3fb" stroke="#4f73c0" stroke-width=".8"/></svg>
<svg style="left:830px;top:85px" width="16" height="16" viewBox="0 0 16 16"><rect x="1" y="1" width="11" height="8.500" rx="2" fill="#d5d9df" stroke="#a4aab3" stroke-width="1"/><rect x="4" y="3.500" width="11" height="8.500" rx="2" fill="#dde0e5" stroke="#a4aab3" stroke-width="1"/><path d="M7 8l7.500 7.500M13 8L7.500 15" stroke="#969ca6" stroke-width="1.800"/><circle cx="15" cy="15.200" r=".8" fill="#e23a2a"/></svg>
<div style="left:862.3px;top:81px;width:437.7px;height:24px;background:#bcc7d8;border-radius:3px;"></div><div style="left:1289.0px;top:81px;width:11px;height:24px;background:#d6dce8;border-radius:0 3px 3px 0;"></div><svg style="left:1290.5px;top:94px" width="7" height="8" viewBox="0 0 7 8"><path d="M.5 1.500h6" stroke="#10182b" stroke-width="1"/><path d="M.3 4h6.400L3.500 7.300z" fill="#10182b"/></svg>
<div style="left:866px;top:86px;width:2px;height:14px;background:repeating-linear-gradient(#4a5a78 0,#4a5a78 2px,rgba(0,0,0,0) 2px,rgba(0,0,0,0) 4px);"></div>
<svg style="left:875px;top:85px" width="16" height="16" viewBox="0 0 16 16"><path d="M5 2L12 8L5 14z" fill="url(#gGreen)" stroke="#1c6a1c" stroke-width=".8"/></svg>
<svg style="left:898px;top:85px" width="16" height="16" viewBox="0 0 16 16"><rect x="5.500" y="3.500" width="2" height="9" fill="#c3c8cf" stroke="#979da7" stroke-width=".8"/><rect x="9.500" y="3.500" width="2" height="9" fill="#c3c8cf" stroke="#979da7" stroke-width=".8"/></svg>
<svg style="left:920px;top:85px" width="16" height="16" viewBox="0 0 16 16"><rect x="3.500" y="4.500" width="9" height="9" fill="url(#gBlue)" stroke="#4f73c0" stroke-width=".8"/></svg>
<svg style="left:942px;top:85px" width="16" height="16" viewBox="0 0 16 16"><rect x="3.500" y="3.500" width="10" height="10" fill="#3f73d5" stroke="#2c55b8" stroke-width=".8"/><path d="M11 12V8H6.500" fill="none" stroke="#fff" stroke-width="1.700"/><path d="M4.300 8L7.800 5v6z" fill="#fff"/></svg>
<div style="left:964px;top:84px;width:1px;height:18px;background:#8591a5;"></div><div style="left:965px;top:84px;width:1px;height:18px;background:#d3dae6;"></div>
<svg style="left:971px;top:85px" width="16" height="16" viewBox="0 0 16 16"><path d="M2.500 6h5.500V3l5.500 5L8 13v-3H2.500z" fill="url(#gYel)" stroke="#6a5410" stroke-width="1"/></svg>
<svg style="left:993px;top:85px" width="16" height="16" viewBox="0 0 16 16"><path d="M8 4.500h7M8 7.500h7M8 10.500h7M4 13.500h11" stroke="#fff" stroke-opacity=".55" stroke-width="3" stroke-linecap="square" fill="none"/><path d="M8 4.500h7M8 7.500h7M8 10.500h7M4 13.500h11" stroke="#000" stroke-width="1" shape-rendering="crispEdges" fill="none"/><path d="M6 7.500H2.800C0 7 0 2.500 3 2.500h2.500" fill="none" stroke="#2f5fc4" stroke-width="1.300"/><path d="M4.500 5.500L7 7.500 4.500 9.500" fill="none" stroke="#2f5fc4" stroke-width="1.300"/></svg>
<svg style="left:1015px;top:85px" width="16" height="16" viewBox="0 0 16 16"><path d="M8 2.500h7M8 5.500h7M8 8.500h7M8 11.500h7" stroke="#fff" stroke-opacity=".55" stroke-width="3" stroke-linecap="square" fill="none"/><path d="M8 2.500h7M8 5.500h7M8 8.500h7M8 11.500h7" stroke="#000" stroke-width="1" shape-rendering="crispEdges" fill="none"/><path d="M6.500 1.500H3.500C2 1.500 1.500 2.500 1.500 4v7c0 2 1 3 3.500 3.300" fill="none" stroke="#2f5fc4" stroke-width="1.300"/><path d="M4 12l3 2.500L4 16" fill="none" stroke="#2f5fc4" stroke-width="1.300"/></svg>
<svg style="left:1037px;top:85px" width="16" height="16" viewBox="0 0 16 16"><path d="M7 6.500h5M9 9.500h6M9 12.500h6M9 15.500h6" stroke="#fff" stroke-opacity=".55" stroke-width="3" stroke-linecap="square" fill="none"/><path d="M7 6.500h5M9 9.500h6M9 12.500h6M9 15.500h6" stroke="#000" stroke-width="1" shape-rendering="crispEdges" fill="none"/><path d="M3 8C.5 7 .5 3 3.500 3H7" fill="none" stroke="#2f5fc4" stroke-width="1.300"/><path d="M5.500 1L8 3 5.500 5" fill="none" stroke="#2f5fc4" stroke-width="1.300"/></svg>
<div style="left:1059px;top:84px;width:1px;height:18px;background:#8591a5;"></div><div style="left:1060px;top:84px;width:1px;height:18px;background:#d3dae6;"></div>
<div style="left:1063px;top:82px;width:161px;height:20px;background:#ffefbb;border:1px solid #e5c365;"></div>
<span class="t" style="left:1066.7px;top:85.1px;letter-spacing:-0.146px;">Шестнадцатеричный вывод</span>
<svg style="left:1230px;top:85px" width="16" height="16" viewBox="0 0 16 16"><path d="M0 5.500C2 2 4 2 6 5.500S10 9 12 5.500 14 3 15.500 4.500" fill="none" stroke="#e23a2a" stroke-width="1"/><path d="M0 7.500C2 4 4 4 6 7.500S10 11 12 7.500" fill="none" stroke="#2f5fc4" stroke-width="1"/><path d="M9 12h6M12 9v6" stroke="#3a3a3a" stroke-width="2.600"/><path d="M9.800 12h4.400M12 9.800v4.400" stroke="#d9dce2" stroke-width="1"/></svg>
<div style="left:1251px;top:84px;width:1px;height:18px;background:#8591a5;"></div><div style="left:1252px;top:84px;width:1px;height:18px;background:#d3dae6;"></div>
<svg style="left:1258px;top:85px" width="16" height="16" viewBox="0 0 16 16"><rect x="1" y="1.500" width="12" height="11" fill="url(#gWin)" stroke="#4b6fb8" stroke-width=".9"/><rect x="1" y="1.500" width="12" height="2.200" fill="#4f7fd8"/><circle cx="11" cy="11" r="4.200" fill="url(#gRed)"/></svg>
<svg style="left:1279px;top:90px" width="6" height="4" viewBox="0 0 7 4"><path d="M0 0h7L3.500 4z" fill="#1b1b1b"/></svg>
<div style="left:443px;top:106px;width:892px;height:24px;background:#bcc7d8;border-radius:3px;"></div><div style="left:1324px;top:106px;width:11px;height:24px;background:#d6dce8;border-radius:0 3px 3px 0;"></div><svg style="left:1325.5px;top:119px" width="7" height="8" viewBox="0 0 7 8"><path d="M.5 1.500h6" stroke="#10182b" stroke-width="1"/><path d="M.3 4h6.400L3.500 7.300z" fill="#10182b"/></svg>
<div style="left:447px;top:111px;width:2px;height:14px;background:repeating-linear-gradient(#4a5a78 0,#4a5a78 2px,rgba(0,0,0,0) 2px,rgba(0,0,0,0) 4px);"></div>
<span class="t" style="left:457.0px;top:110.8px;color:#1b1b1b;letter-spacing:-0.027px;">Процесс:</span>
<div style="left:514.5px;top:108.6px;width:197px;height:16.8px;background:#fff;border:1px solid #8d9bb3;box-shadow:0 0 0 1px rgba(255,255,255,.35);"></div><span class="t" style="left:518.5px;top:111.0px;letter-spacing:-0.233px;">[0x4B48] console_simple.exe</span><svg style="left:705.5px;top:117.2px" width="6" height="4" viewBox="0 0 7 4"><path d="M0 0h7L3.500 4z" fill="#1b1b1b"/></svg>
<span class="t" style="left:720.2px;top:110.8px;color:#1b1b1b;letter-spacing:0.024px;">Поток:</span>
<div style="left:763.5px;top:108.6px;width:197px;height:16.8px;background:#fff;border:1px solid #8d9bb3;box-shadow:0 0 0 1px rgba(255,255,255,.35);"></div><span class="t" style="left:766.8px;top:111.0px;letter-spacing:-0.011px;">[0x4B54] Основной поток</span><svg style="left:954.5px;top:117.2px" width="6" height="4" viewBox="0 0 7 4"><path d="M0 0h7L3.500 4z" fill="#1b1b1b"/></svg>
<svg style="left:971px;top:110px" width="16" height="16" viewBox="0 0 16 16"><path d="M3 1.500L8.500 15" stroke="#1a3a8a" stroke-width="1.300"/><path d="M3.200 1.500C6 0 8 3 11.500 2.500 13 2.300 14 1.500 15 1.200 13.500 4 12.500 7 8.500 8 7 8.300 6.500 8.200 6 8z" fill="#e8382a" stroke="#a01a10" stroke-width=".5"/></svg>
<svg style="left:992px;top:110px" width="16" height="16" viewBox="0 0 16 16"><path d="M3 1.500L8.500 15" stroke="#8d939b" stroke-width="1.300"/><path d="M3.200 1.500C6 0 8 3 11.500 2.500 13 2.300 14 1.500 15 1.200 13.500 4 12.500 7 8.500 8 7 8.300 6.500 8.200 6 8z" fill="#d5d9df" stroke="#969ca6" stroke-width=".6"/><path d="M5 3l5 4M8 2.500l4 3" stroke="#a4aab3" stroke-width=".6"/></svg>
<span class="t" style="left:1013.3px;top:110.8px;color:#1b1b1b;letter-spacing:-0.349px;">Кадр стека:</span>
<div style="left:1080.3px;top:108.6px;width:237.2px;height:16.8px;background:#fff;border:1px solid #8d9bb3;box-shadow:0 0 0 1px rgba(255,255,255,.35);"></div><span class="t" style="left:1084.8px;top:111.0px;letter-spacing:-0.174px;">console_simple.exe!main()  Строка 40</span><svg style="left:1311.5px;top:117.2px" width="6" height="4" viewBox="0 0 7 4"><path d="M0 0h7L3.500 4z" fill="#1b1b1b"/></svg>
<svg style="left:441px;top:132px" width="1426" height="698" shape-rendering="crispEdges"><defs><pattern id="dots" width="4" height="4" patternUnits="userSpaceOnUse"><rect width="4" height="4" fill="#2b3c5c"/><rect x="2" y="2" width="1" height="1" fill="#3c5176"/><rect x="0" y="0" width="1" height="1" fill="#3c5176"/></pattern></defs><rect width="1426" height="698" fill="url(#dots)"/></svg>
<div style="left:441px;top:132px;width:1426px;height:1px;background:#1f2e4a;"></div>
<div style="left:447px;top:138px;width:251px;height:19px;background:linear-gradient(#4e6288,#43577b);border-radius:2px 2px 0 0;"></div>
<span class="t" style="left:449.6px;top:140.1px;color:#fff;letter-spacing:-0.103px;">Обозреватель решений</span>
<svg style="left:654.5px;top:145.5px" width="7" height="4" viewBox="0 0 7 4"><path d="M0 0h7L3.500 4z" fill="#e6ebf3"/></svg>
<svg style="left:669px;top:141px" width="10" height="12" viewBox="0 0 10 12"><path d="M2 1h5.500v5.500H2zM6 1v5.500M.5 7h8.500M4.700 7v4.500" fill="none" stroke="#e6ebf3" stroke-width="1.100"/></svg>
<svg style="left:684px;top:142.500px" width="10" height="10" viewBox="0 0 10 10"><path d="M1 1l8 8M9 1l-8 8" stroke="#e6ebf3" stroke-width="1.400"/></svg>
<div style="left:447px;top:157px;width:251px;height:26px;background:#bcc7d8;"></div>
<svg style="left:454px;top:162px" width="16" height="16" viewBox="0 0 16 16"><path d="M.5 2.500h6.500v-1.500h5.500v11H.5z" fill="#f3ebc2" stroke="#b9ae84" stroke-width=".8"/><rect x=".5" y=".5" width="6.500" height="2.500" fill="#f5d262" stroke="#c9a63c" stroke-width=".6"/><rect x="7.500" y="1.500" width="4.500" height="1.500" fill="#a9b6c6"/><path d="M3.500 5.500h8.500M3.500 8.500h8.500" stroke="#fff" stroke-width="1.200"/><path d="M2 3.500h1M2 5.500h1M2 7.500h1M2 9.500h1" stroke="#3f5fa5" stroke-width="1"/><rect x="4.500" y="8.500" width="11" height="6.500" fill="#eef2fb" stroke="#3a4f7a" stroke-width="1"/><path d="M6 10.500h2M6 12.800h2" stroke="#1b1b2b" stroke-width="1.300"/><path d="M9.500 10.500h4.500M9.500 12.800h4.500" stroke="#8a96ad" stroke-width="1.200"/></svg>
<div style="left:476px;top:161px;width:1px;height:17px;background:#8591a5;"></div><div style="left:477px;top:161px;width:1px;height:17px;background:#d3dae6;"></div>
<svg style="left:483px;top:162px" width="16" height="16" viewBox="0 0 16 16"><rect x=".5" y=".5" width="6" height="10.500" fill="#fbfbfb" stroke="#9aa0a8" stroke-width=".9" stroke-dasharray="1 1"/><path d="M7.500 2.500h5l2.500 2.500v7h-7.500z" fill="url(#gYelPage)" stroke="#4a3a12" stroke-width=".9"/><path d="M12.500 2.500v2.500h2.500" fill="none" stroke="#4a3a12" stroke-width=".8"/><path d="M3.500 6.500h4.500l2.500 2.500v6.500h-7z" fill="url(#gWin)" stroke="#3f5f9f" stroke-width="1"/><path d="M5 10.500h4M5 12.500h4M5 8.500h2" stroke="#4f78c4" stroke-width="1"/></svg>
<div style="left:505px;top:161px;width:1px;height:17px;background:#8591a5;"></div><div style="left:506px;top:161px;width:1px;height:17px;background:#d3dae6;"></div>
<svg style="left:513px;top:162px" width="16" height="16" viewBox="0 0 16 16"><rect x=".8" y="1.800" width="13.400" height="13" fill="#fff" stroke="#4a4030" stroke-width="1.300"/><rect x="1.500" y="2.500" width="2" height="11.700" fill="#d9d2b4"/><path d="M4.500 5.500h3M6.500 7.800h3M4.500 12.500h5" stroke="#1030ff" stroke-width="1.300"/><path d="M9 5.500h3.500M11 7.800h1.500M6.500 10.200h5" stroke="#b4b8c0" stroke-width="1.100"/></svg>
<svg style="left:534px;top:162px" width="16" height="16" viewBox="0 0 16 16"><rect x="5" y=".5" width="7" height="4" rx="1" fill="#8fb0e6" stroke="#3f63b5" stroke-width=".9"/><rect x="6.300" y="1.800" width="4.400" height="1.300" fill="#eef3fb"/><rect x=".5" y="8.500" width="6" height="4.500" rx="1" fill="#8fb0e6" stroke="#3f63b5" stroke-width=".9"/><rect x="1.800" y="10.300" width="3.400" height="1.200" fill="#eef3fb"/><path d="M8.500 4.500v2H3.500v2" fill="none" stroke="#2f4f95" stroke-width="1"/><circle cx="11" cy="10.300" r="3.400" fill="#e6f0fa" stroke="#8d97aa" stroke-width="1.200"/><path d="M13.500 13l2.300 2.500" stroke="#e08a1e" stroke-width="2.200" stroke-linecap="round"/></svg>
<div style="left:447px;top:183px;width:251px;height:647px;background:#fff;"></div>
<div style="left:447px;top:183px;width:251px;height:647px;overflow:hidden;"><svg style="left:11px;top:1.5px" width="16" height="16" viewBox="0 0 16 16"><rect x=".5" y=".5" width="15" height="13" fill="url(#gSln)" stroke="#8fb0ea" stroke-width="1"/><rect x=".5" y=".5" width="15" height="2.500" fill="#5f8fe6"/><path d="M8.500 12.200C6.500 9.300 2.600 9.700 2.600 12.300s3.900 3 5.900.1" fill="none" stroke="#2fa4e6" stroke-width="2"/><path d="M8.500 12.200c2-2.900 5.900-2.500 5.900.1s-3.900 3-5.900.1" fill="none" stroke="#7a48c4" stroke-width="2"/><path d="M7 10.500l3 3.500" stroke="#3f6fd8" stroke-width="1.800"/></svg><span class="t" style="left:32.0px;top:2.1px;letter-spacing:-0.034px;">Решение "console_simple"  (проектов: 1)</span></div>
<svg style="left:454px;top:209.3px" width="9" height="6" viewBox="0 0 9 6"><path d="M.7.800L4.500 4.600 8.300.800" fill="none" stroke="#404040" stroke-width="1.600"/></svg>
<svg style="left:477.5px;top:202.5px" width="16" height="16" viewBox="0 0 16 16"><rect x="1.500" y=".5" width="13" height="12.500" fill="url(#gSln)" stroke="#6a7ea6" stroke-width="1"/><rect x="1.500" y=".5" width="13" height="2.300" fill="#1f45c4"/><path d="M6.500 2.500v5M4 5h5" stroke="#f0b818" stroke-width="1.700"/><path d="M10.500 5v5M8 7.500h5" stroke="#f0b818" stroke-width="1.700"/><circle cx="5.800" cy="12.800" r="3.200" fill="#2f7fd0" stroke="#1f4f9a" stroke-width=".6"/><path d="M4 11.500c1.500-.5 2.500.8 2 2.200-.3 1-1.500 1.300-2.300.5z" fill="#3faa3f"/><path d="M6.800 12c.8-.3 1.700.2 1.700 1l-1.200.8z" fill="#3faa3f"/><path d="M1.500 11.800L.3 13l1.200 1.200M10 11.800l1.200 1.200-1.200 1.200" stroke="#222" stroke-width=".9" fill="none"/></svg>
<span class="t" style="left:498.5px;top:203.1px;font-weight:700;letter-spacing:-0.539px;">console_simple</span>
<svg style="left:474.8px;top:226px" width="6" height="9" viewBox="0 0 6 9"><path d="M.800.700L4.600 4.500.800 8.300" fill="none" stroke="#a6a6a6" stroke-width="1.600"/></svg>
<svg style="left:496px;top:221px" width="16" height="16" viewBox="0 0 16 16"><path d="M1 2.500l1-1.500h4.500l1 1.500H15.500v11H1z" fill="url(#gFold)" stroke="#b5892a" stroke-width=".9"/><path d="M15.100 3.500v9.700H6" fill="none" stroke="#7a5a10" stroke-width=".8"/><rect x=".5" y="9.500" width="6" height="6" fill="#fff" stroke="#333" stroke-width=".9"/><path d="M2 14l3-3M2.800 10.800h2.400v2.400" fill="none" stroke="#000" stroke-width="1"/></svg>
<span class="t" style="left:517.4px;top:221.1px;letter-spacing:-0.072px;">Внешние зависимости</span>
<svg style="left:496px;top:238.5px" width="16" height="16" viewBox="0 0 16 16"><path d="M1 3l1-1.500h4.500l1 1.500H15v11H1z" fill="url(#gFold)" stroke="#b5892a" stroke-width=".9"/><path d="M1.500 4.500h13" stroke="#fff3c4" stroke-width="1"/><path d="M14.600 4v10.200H1.200" fill="none" stroke="#7a5a10" stroke-width=".8"/></svg>
<span class="t" style="left:517.4px;top:239.1px;letter-spacing:0.011px;">Заголовочные файлы</span>
<svg style="left:473px;top:263.3px" width="9" height="6" viewBox="0 0 9 6"><path d="M.7.800L4.500 4.600 8.300.800" fill="none" stroke="#404040" stroke-width="1.600"/></svg>
<svg style="left:496px;top:256.5px" width="16" height="16" viewBox="0 0 16 16"><path d="M1 3l1-1.500h4.500l1 1.500H13v4H1z" fill="#e9c566" stroke="#b5892a" stroke-width=".9"/><path d="M3.500 6.500H16L13 14H.8z" fill="url(#gFold)" stroke="#a87d22" stroke-width=".9"/><path d="M1 14.300h12" stroke="#5a4410" stroke-width=".9"/></svg>
<span class="t" style="left:517.4px;top:257.1px;letter-spacing:-0.017px;">Файлы исходного кода</span>
<div style="left:513px;top:274px;width:77px;height:18px;background:#d9d9d9;"></div>
<svg style="left:515px;top:275px" width="16" height="16" viewBox="0 0 16 16"><path d="M1.500 1h9.500l3.500 3.500V15H1.500z" fill="url(#gWin)" stroke="#7a8aa8" stroke-width=".9"/><path d="M11 1v3.500h3.500" fill="none" stroke="#7a8aa8" stroke-width=".8"/><path d="M5.800 5.300C3 4 1.500 5.800 1.500 7.500s1.500 3.500 4.300 2.200" fill="none" stroke="#1a3fb0" stroke-width="1.600"/><path d="M6.500 7.500h3.500M8.200 5.800v3.400M10.500 7.500H14M12.200 5.800v3.400" stroke="#1a3fb0" stroke-width="1.200"/></svg>
<span class="t" style="left:536.4px;top:275.1px;letter-spacing:0.050px;">main.cpp</span>
<svg style="left:496px;top:292.5px" width="16" height="16" viewBox="0 0 16 16"><path d="M1 3l1-1.500h4.500l1 1.500H15v11H1z" fill="url(#gFold)" stroke="#b5892a" stroke-width=".9"/><path d="M1.500 4.500h13" stroke="#fff3c4" stroke-width="1"/><path d="M14.600 4v10.200H1.200" fill="none" stroke="#7a5a10" stroke-width=".8"/></svg>
<span class="t" style="left:517.4px;top:293.1px;letter-spacing:-0.124px;">Файлы ресурсов</span>
<span class="t" style="left:708.8px;top:141.0px;color:#fff;letter-spacing:0.069px;">Дизассемблированный код</span>
<div style="left:887px;top:138px;width:79px;height:20px;background:linear-gradient(#fffcf3,#ffe9a8);border-radius:4px 4px 0 0;"></div>
<span class="t" style="left:891.4px;top:141.0px;letter-spacing:0.050px;">main.cpp</span>
<svg style="left:951px;top:144px" width="10" height="10" viewBox="0 0 10 10"><path d="M1 1l8 8M9 1l-8 8" stroke="#5a5340" stroke-width="1.500"/></svg>
<div style="left:704px;top:158px;width:1163px;height:4px;background:#ffe8a6;border-radius:3px 0 0 0;"></div>
<div style="left:704px;top:162px;width:1163px;height:23px;background:#2c3f62;"></div>
<div style="left:1851px;top:163.5px;width:2px;height:19.5px;background:#6f7f9b;"></div>
<div style="left:705.5px;top:163.5px;width:1145.5px;height:19.5px;background:#f1f3f9;box-shadow:inset 1px 1px 0 #fbfcfe;"></div>
<div style="left:1853px;top:163.5px;width:14px;height:19.5px;background:#f1f3f9;"></div>
<span class="t" style="left:727.4px;top:166.0px;letter-spacing:-0.116px;">(Глобальная область)</span>
<svg style="left:1841.5px;top:172.5px" width="6" height="4" viewBox="0 0 7 4"><path d="M0 0h7L3.500 4z" fill="#1b1b1b"/></svg>
<svg style="left:1855px;top:166px" width="14" height="14" viewBox="0 0 16 16"><path d="M10 3l5-2h1v12h-1l-5-3-2-4z" fill="#e070d8" stroke="#a040a0" stroke-width=".7"/><path d="M1 6h6M2 8h5M1 10h6" stroke="#f0d060" stroke-width=".9"/></svg>
<div style="left:704px;top:185px;width:1163px;height:617px;background:#fff;"></div>
<div style="left:704px;top:185px;width:17px;height:617px;background:#f0f0f0;"></div>
<div style="left:724px;top:185px;width:4px;height:617px;background:repeating-linear-gradient(#62dd62 0,#62dd62 15px,#93ea93 15px,#93ea93 16px);background-position:0 -3px;box-shadow:-1px 0 0 rgba(98,221,98,.35),1px 0 0 rgba(98,221,98,.25);"></div>
<div style="left:736px;top:185px;width:1px;height:617px;background:#a5a5a5;"></div>
<div class="code" style="left:741.7px;top:182.4px">    IShellItemImageFactory *pImgFactory = NULL;
    SIZE sz;
    HBITMAP hBmp = NULL;
    HWND hWnd = NULL;
    HDC hDC = NULL, hDCBuf = NULL;

    <b>if</b> (FAILED(hr = CoInitialize(NULL))) {
        <b>goto</b> CleanUp;
    }

    <b>if</b> (FAILED(hr = SHCreateItemFromParsingName(L<i>"                  \Stay.2005.BDRip-AVC.mkv"</i>, NULL, IID_IShellItemImageFactory, (<b>void</b>**)&amp;pImgFactory))) {
        <b>goto</b> CleanUp;
    }

    sz.cx = 256;
    sz.cy = 256;

    <b>if</b> (FAILED(hr = pImgFactory-&gt;GetImage(sz, SIIGBF_THUMBNAILONLY | SIIGBF_RESIZETOFIT, &amp;hBmp))) {
        <b>goto</b> CleanUp;
    }

    <b>if</b> (NULL == (hWnd = CreateWindow(L<i>"#32770"</i>, NULL, WS_POPUP | WS_VISIBLE, 200, 200, 200, 200, NULL, NULL, NULL, NULL)) ||
        NULL == (hDC = GetDC(hWnd)) ||
        NULL == (hDCBuf = CreateCompatibleDC(hDC))) {
        <b>goto</b> CleanUp;
    }

    SaveDC(hDCBuf);
    SelectObject(hDCBuf, hBmp);
    BitBlt(hDC, 0, 0, 256, 256, hDCBuf, 0, 0, SRCCOPY);
    RestoreDC(hDCBuf, -1);

CleanUp:

    <b>if</b> (hDC)
        ReleaseDC(hWnd, hDC);
    <b>if</b> (hDCBuf)
        DeleteDC(hDCBuf);</div>
<div style="left:1089.6px;top:344.7px;width:132.6px;height:10px;background:#ed1c24;"></div>
<svg style="left:706px;top:279px" width="14" height="14" viewBox="0 0 14 14"><circle cx="7" cy="7" r="6.200" fill="url(#gRed)" stroke="#8e2a22" stroke-width=".6"/></svg>
<svg style="left:705.500px;top:727px" width="14" height="13" viewBox="0 0 14 13"><path d="M1 4.500h6V1l6 5.500L7 12V8.500H1z" fill="url(#gYel)" stroke="#6a5410" stroke-width="1"/></svg>
<div style="left:704px;top:802px;width:1163px;height:17px;background:#f0f0f0;"></div>
<div style="left:704px;top:802px;width:59.5px;height:17px;background:#e3e3e3;"></div>
<div style="left:704.5px;top:802.5px;width:58.5px;height:13.5px;background:#fff;"></div>
<span class="t" style="left:707.6px;top:801.6px;letter-spacing:-0.606px;">100 %</span>
<svg style="left:755px;top:809.3px" width="6" height="4" viewBox="0 0 7 4"><path d="M0 0h7L3.500 4z" fill="#1b1b1b"/></svg>
<svg style="left:770px;top:806px" width="6" height="9" viewBox="0 0 6 9"><path d="M5 .800L1.200 4.500 5 8.200" fill="none" stroke="#c4c4c4" stroke-width="1.200"/></svg>
<div style="left:704px;top:819px;width:1163px;height:4px;background:#ffe8a6;border-radius:0 0 0 3px;"></div>
<div style="left:704px;top:829px;width:1163px;height:1px;background:#4f6288;"></div>
<svg width="0" height="0" style="left:0;top:0"><defs>
<linearGradient id="gFold" x1="0" y1="0" x2="0" y2="1"><stop offset="0" stop-color="#fdeaa6"/><stop offset="1" stop-color="#e5b13c"/></linearGradient>
<linearGradient id="gWin" x1="0" y1="0" x2="1" y2="1"><stop offset="0" stop-color="#ffffff"/><stop offset="1" stop-color="#c9d6ee"/></linearGradient>
<linearGradient id="gBlue" x1="0" y1="0" x2="1" y2="1"><stop offset="0" stop-color="#9fc4f6"/><stop offset="1" stop-color="#2f5fc4"/></linearGradient>
<linearGradient id="gDisk" x1="0" y1="0" x2="1" y2="1"><stop offset="0" stop-color="#7d7fd8"/><stop offset="1" stop-color="#3f3f9e"/></linearGradient>
<linearGradient id="gGray" x1="0" y1="0" x2="1" y2="1"><stop offset="0" stop-color="#e3e6ea"/><stop offset="1" stop-color="#a9afb8"/></linearGradient>
<linearGradient id="gGreen" x1="0" y1="0" x2="0" y2="1"><stop offset="0" stop-color="#58c558"/><stop offset="1" stop-color="#1f7a1f"/></linearGradient>
<linearGradient id="gYel" x1="0" y1="0" x2="0" y2="1"><stop offset="0" stop-color="#fff2a0"/><stop offset="1" stop-color="#e2b020"/></linearGradient>
<linearGradient id="gYelPage" x1="0" y1="0" x2="1" y2="1"><stop offset="0" stop-color="#fff7d6"/><stop offset="1" stop-color="#e6c356"/></linearGradient>
<linearGradient id="gSln" x1="0" y1="0" x2="1" y2="1"><stop offset="0" stop-color="#ffffff"/><stop offset="1" stop-color="#d5ddf3"/></linearGradient>
<radialGradient id="gRed" cx=".35" cy=".3" r=".8"><stop offset="0" stop-color="#f6a9a0"/><stop offset=".5" stop-color="#d8463c"/><stop offset="1" stop-color="#8e1d16"/></radialGradient>
</defs></svg>
</div>
</body></html>
